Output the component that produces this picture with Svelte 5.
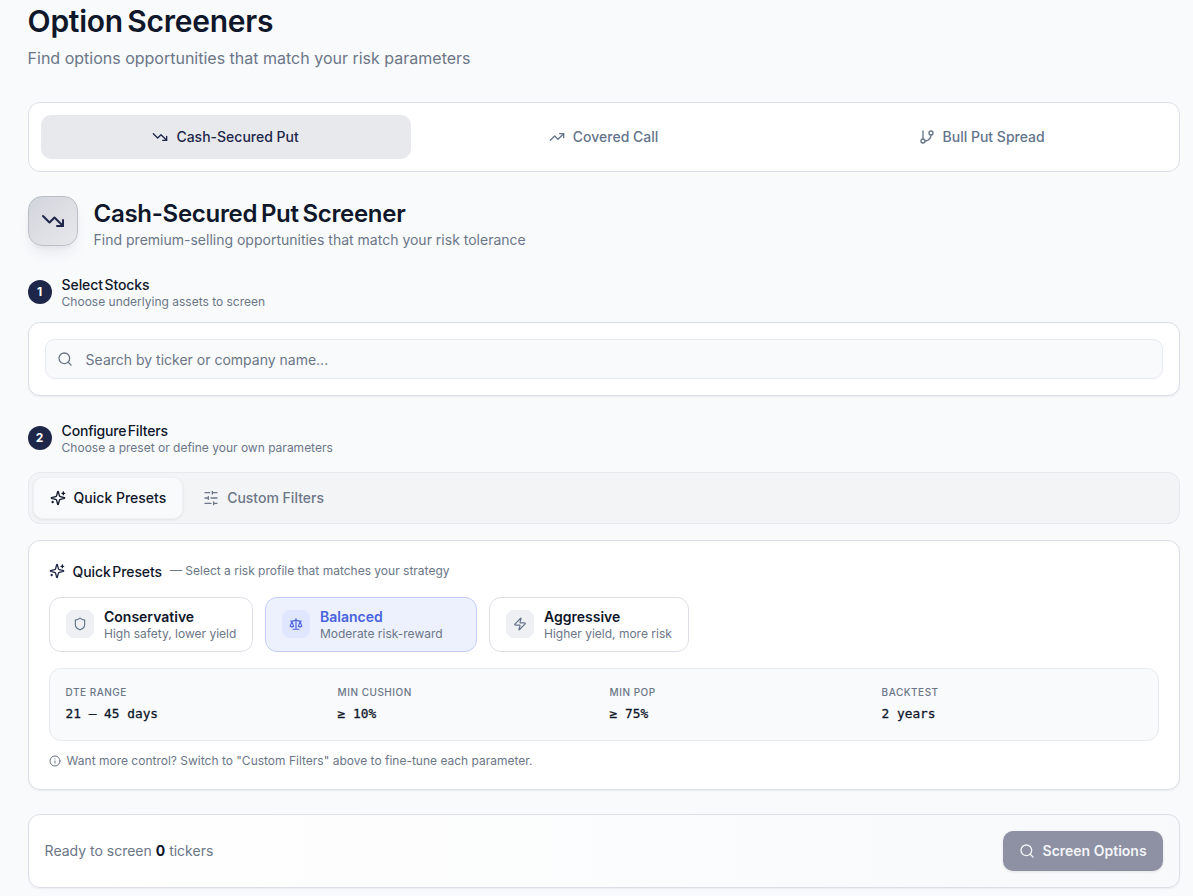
<script>
    const strategies = [
        { id: 'csp', label: 'Cash-Secured Put', icon: 'trendDown' },
        { id: 'cc', label: 'Covered Call', icon: 'trendUp' },
        { id: 'bps', label: 'Bull Put Spread', icon: 'branch' },
    ]

    const presets = [
        {
            id: 'conservative', label: 'Conservative', hint: 'High safety, lower yield', icon: 'shield',
            stats: ['30 – 60 days', '≥ 15%', '≥ 85%', '3 years'],
        },
        {
            id: 'balanced', label: 'Balanced', hint: 'Moderate risk-reward', icon: 'scale',
            stats: ['21 – 45 days', '≥ 10%', '≥ 75%', '2 years'],
        },
        {
            id: 'aggressive', label: 'Aggressive', hint: 'Higher yield, more risk', icon: 'zap',
            stats: ['7 – 30 days', '≥ 5%', '≥ 65%', '1 years'],
        },
    ]

    const statLabels = ['DTE Range', 'Min Cushion', 'Min POP', 'Backtest']

    let strategy = $state('csp')
    let mode = $state('presets')
    let preset = $state('balanced')
    let query = $state('')
    let tickers = $state([])

    let current = $derived(presets.find((p) => p.id === preset))
</script>

{#snippet icon(name, size = 16)}
    <svg width={size} height={size} viewBox="0 0 24 24" fill="none" stroke="currentColor" stroke-width="2" stroke-linecap="round" stroke-linejoin="round">
        {#if name === 'trendDown'}
            <path d="m22 17-8.5-8.5-5 5L2 7" />
            <path d="M16 17h6v-6" />
        {:else if name === 'trendUp'}
            <path d="m22 7-8.5 8.5-5-5L2 17" />
            <path d="M16 7h6v6" />
        {:else if name === 'branch'}
            <path d="M6 3v12" />
            <circle cx="18" cy="6" r="3" />
            <circle cx="6" cy="18" r="3" />
            <path d="M18 9a9 9 0 0 1-9 9" />
        {:else if name === 'search'}
            <circle cx="11" cy="11" r="8" />
            <path d="m21 21-4.3-4.3" />
        {:else if name === 'sparkles'}
            <path d="M9.937 15.5A2 2 0 0 0 8.5 14.063l-6.135-1.582a.5.5 0 0 1 0-.962L8.5 9.936A2 2 0 0 0 9.937 8.5l1.582-6.135a.5.5 0 0 1 .963 0L14.063 8.5A2 2 0 0 0 15.5 9.937l6.135 1.581a.5.5 0 0 1 0 .964L15.5 14.063a2 2 0 0 0-1.437 1.437l-1.582 6.135a.5.5 0 0 1-.963 0z" />
            <path d="M20 3v4M22 5h-4M4 17v2M5 18H3" />
        {:else if name === 'sliders'}
            <path d="M21 4h-7M10 4H3M21 12h-9M8 12H3M21 20h-5M12 20H3M14 2v4M8 10v4M16 18v4" />
        {:else if name === 'shield'}
            <path d="M20 13c0 5-3.5 7.5-7.66 8.95a1 1 0 0 1-.67-.01C7.5 20.5 4 18 4 13V6a1 1 0 0 1 1-1c2 0 4.5-1.2 6.24-2.72a1.17 1.17 0 0 1 1.52 0C14.51 3.81 17 5 19 5a1 1 0 0 1 1 1z" />
        {:else if name === 'scale'}
            <path d="m16 16 3-8 3 8c-.87.65-1.92 1-3 1s-2.13-.35-3-1Z" />
            <path d="m2 16 3-8 3 8c-.87.65-1.92 1-3 1s-2.13-.35-3-1Z" />
            <path d="M7 21h10M12 3v18" />
            <path d="M3 7h2c2 0 5-1 7-2 2 1 5 2 7 2h2" />
        {:else if name === 'zap'}
            <path d="M4 14a1 1 0 0 1-.78-1.63l9.9-10.2a.5.5 0 0 1 .86.46l-1.92 6.02A1 1 0 0 0 13 10h7a1 1 0 0 1 .78 1.63l-9.9 10.2a.5.5 0 0 1-.86-.46l1.92-6.02A1 1 0 0 0 11 14z" />
        {:else if name === 'info'}
            <circle cx="12" cy="12" r="10" />
            <path d="M12 16v-4M12 8h.01" />
        {/if}
    </svg>
{/snippet}

{#snippet step(number, title, hint)}
    <div class="step">
        <span class="step-number">{number}</span>
        <div>
            <h3>{title}</h3>
            <p>{hint}</p>
        </div>
    </div>
{/snippet}

<main>
    <h1>Option Screeners</h1>
    <p class="lead">Find options opportunities that match your risk parameters</p>

    <nav class="card strategies">
        {#each strategies as s}
            <button class="strategy" class:active={strategy === s.id} onclick={() => (strategy = s.id)}>
                {@render icon(s.icon)}
                {s.label}
            </button>
        {/each}
    </nav>

    <header>
        <div class="header-icon">{@render icon('trendDown', 24)}</div>
        <div>
            <h2>Cash-Secured Put Screener</h2>
            <p>Find premium-selling opportunities that match your risk tolerance</p>
        </div>
    </header>

    {@render step(1, 'Select Stocks', 'Choose underlying assets to screen')}

    <section class="card search-card">
        <label class="search">
            {@render icon('search')}
            <input bind:value={query} placeholder="Search by ticker or company name..." />
        </label>
    </section>

    {@render step(2, 'Configure Filters', 'Choose a preset or define your own parameters')}

    <div class="modes">
        <button class="mode" class:active={mode === 'presets'} onclick={() => (mode = 'presets')}>
            {@render icon('sparkles')}
            Quick Presets
        </button>
        <button class="mode" class:active={mode === 'custom'} onclick={() => (mode = 'custom')}>
            {@render icon('sliders')}
            Custom Filters
        </button>
    </div>

    <section class="card panel">
        <div class="panel-title">
            {@render icon('sparkles')}
            <h3>Quick Presets</h3>
            <span>— Select a risk profile that matches your strategy</span>
        </div>

        <div class="presets">
            {#each presets as p}
                <button class="preset {p.id}" class:active={preset === p.id} onclick={() => (preset = p.id)}>
                    <span class="preset-icon">{@render icon(p.icon, 14)}</span>
                    <span class="preset-text">
                        <strong>{p.label}</strong>
                        <small>{p.hint}</small>
                    </span>
                </button>
            {/each}
        </div>

        <dl class="stats">
            {#each statLabels as label, i}
                <div>
                    <dt>{label}</dt>
                    <dd>{current.stats[i]}</dd>
                </div>
            {/each}
        </dl>

        <p class="note">
            {@render icon('info', 12)}
            Want more control? Switch to "Custom Filters" above to fine-tune each parameter.
        </p>
    </section>

    <footer class="card">
        <p>Ready to screen <b>{tickers.length}</b> tickers</p>
        <button class="run" disabled={!tickers.length}>
            {@render icon('search')}
            Screen Options
        </button>
    </footer>
</main>

<style>
    :global(body) {
        background: #f9fafc;
        overflow: hidden;
    }

    main {
        box-sizing: border-box;
        width: 1179.6px;
        padding: 3px 0 8px 27.6px;
        color: #0f172a;
        font-family: Inter, "Liberation Sans", sans-serif;
        font-size: 14px;
        line-height: 20px;
    }

    main :global(*) {
        box-sizing: border-box;
    }

    h1, h2, h3, p, dl, dd {
        margin: 0;
    }

    p {
        color: #6b7687;
    }

    button, input {
        font: inherit;
        color: inherit;
        border: 0;
        background: none;
    }

    button {
        display: flex;
        align-items: center;
        gap: 8px;
        padding: 0;
        cursor: pointer;
    }

    svg {
        flex: none;
        display: block;
    }

    h1 {
        font-size: 30px;
        line-height: 36px;
        font-weight: 600;
        letter-spacing: -0.25px;
        word-spacing: -3px;
    }

    .lead {
        margin: 7px 0 32px;
        font-size: 16px;
        line-height: 24px;
    }

    .card {
        background: #fff;
        border: 1px solid #dcdfe5;
        border-radius: 12px;
        box-shadow: 0 1px 2px rgba(15, 23, 42, 0.06);
    }

    .strategies {
        display: grid;
        grid-template-columns: repeat(3, 1fr);
        gap: 8px;
        padding: 12px;
        box-shadow: none;
    }

    .strategy {
        justify-content: center;
        height: 44px;
        border-radius: 10px;
        font-weight: 500;
        color: #64748b;
    }

    .strategy.active {
        background: #e8e9ed;
        color: #1e2749;
    }

    header {
        display: flex;
        align-items: flex-start;
        gap: 16px;
        height: 50px;
        margin: 24px 0 30px;
    }

    .header-icon {
        display: grid;
        place-items: center;
        width: 50px;
        height: 50px;
        border: 1px solid #b9bec8;
        border-radius: 14px;
        background: linear-gradient(135deg, #d2d5dc, #e7e8ec);
        color: #1e2749;
        box-shadow: 0 9px 14px -3px rgba(30, 39, 73, 0.08), 0 3px 5px -2px rgba(30, 39, 73, 0.06);
    }

    h2 {
        padding-top: 2px;
        font-size: 24px;
        line-height: 32px;
        font-weight: 600;
        letter-spacing: -0.3px;
        word-spacing: -2px;
    }

    .step {
        display: flex;
        align-items: center;
        gap: 10px;
        height: 34px;
    }

    .step-number {
        display: grid;
        place-items: center;
        width: 24px;
        height: 24px;
        margin-top: -2px;
        border-radius: 50%;
        background: #1e2749;
        color: #fff;
        font-size: 12px;
        font-weight: 700;
    }

    h3 {
        font-size: 14px;
        line-height: 18px;
        font-weight: 500;
        letter-spacing: -0.1px;
        word-spacing: -2px;
    }

    .step:nth-of-type(2) h3 {
        letter-spacing: -0.2px;
    }

    .step p {
        font-size: 12px;
        line-height: 16px;
    }

    .search-card {
        margin: 12px 0 26px;
        padding: 16px;
    }

    .search {
        display: flex;
        align-items: center;
        gap: 13px;
        height: 40px;
        padding: 0 11px;
        border: 1px solid #e7eaee;
        border-radius: 10px;
        background: #f9fafc;
        color: #6b7687;
    }

    .search input {
        flex: 1;
        padding: 2px 0 0;
        outline: 0;
    }

    .search input::placeholder {
        color: #6b7687;
        opacity: 1;
    }

    .modes {
        display: flex;
        gap: 4px;
        margin: 16px 0;
        padding: 4px;
        border: 1px solid #e7e9ec;
        border-radius: 12px;
        background: #f3f4f6;
    }

    .mode {
        height: 42px;
        padding: 0 15.5px 0 16px;
        border: 1px solid transparent;
        border-radius: 10px;
        font-weight: 500;
        color: #6b7687;
    }

    .mode.active {
        border-color: #eff1f3;
        background: #f9fafc;
        color: #0f172a;
        box-shadow: 0 1px 3px rgba(15, 23, 42, 0.07);
    }

    .mode:last-child {
        padding-left: 15.4px;
    }

    .panel {
        height: 250px;
        padding: 20px;
    }

    .panel-title {
        display: flex;
        align-items: center;
        gap: 8px;
        height: 20px;
        color: #1e2749;
    }

    .panel-title h3 {
        padding-top: 2px;
        color: #0f172a;
    }

    .panel-title span {
        font-size: 12px;
        color: #6b7687;
    }

    .presets {
        display: flex;
        gap: 12px;
        margin: 16px 0;
    }

    .preset {
        width: 204px;
        height: 55px;
        gap: 10px;
        padding: 0 16px 1px 16.4px;
        border: 1px solid #dcdfe5;
        border-radius: 12px;
        text-align: left;
    }

    .preset.balanced {
        width: 212px;
    }

    .preset.aggressive {
        width: 200px;
    }

    .preset.active {
        border-color: #c3cdf6;
        background: #edf1fe;
    }

    .preset-icon {
        display: grid;
        flex: none;
        place-items: center;
        width: 28px;
        height: 28px;
        border-radius: 8px;
        background: #eef0f3;
        color: #64748b;
    }

    .active .preset-icon {
        background: #e0e6fd;
        color: #4a63dd;
    }

    .preset-text {
        display: flex;
        flex-direction: column;
        padding-top: 2px;
        white-space: nowrap;
    }

    .preset strong {
        font-weight: 600;
        line-height: 17px;
    }

    .preset.active strong {
        color: #4a63dd;
    }

    .preset small {
        font-size: 12px;
        line-height: 17px;
        color: #6b7687;
    }

    .stats {
        display: grid;
        grid-template-columns: repeat(4, 1fr);
        gap: 12px;
        height: 73px;
        padding: 16px;
        border: 1px solid #e7eaee;
        border-radius: 12px;
        background: #f9fafc;
    }

    dt {
        font-size: 10px;
        line-height: 15px;
        font-weight: 500;
        letter-spacing: 0.5px;
        text-transform: uppercase;
        color: #6b7687;
    }

    dd {
        margin-top: 4px;
        font: 400 12.8px/19px "DejaVu Sans Mono", monospace;
        -webkit-text-stroke: 0.3px currentColor;
    }

    .note {
        display: flex;
        align-items: center;
        gap: 6px;
        margin-top: 12px;
        font-size: 12px;
        line-height: 16px;
    }

    footer {
        display: flex;
        align-items: center;
        justify-content: space-between;
        margin-top: 24px;
        padding: 16px;
    }

    footer.card {
        background: linear-gradient(90deg, #fff, #f8f9fb);
    }

    footer b {
        font-weight: 700;
        color: #0f172a;
    }

    .run {
        height: 40px;
        padding: 0 16px 0 15.6px;
        border-radius: 10px;
        background: #8d91a3;
        color: #f4f5f8;
        font-weight: 600;
        box-shadow: 0 1px 3px rgba(15, 23, 42, 0.1);
    }
</style>
